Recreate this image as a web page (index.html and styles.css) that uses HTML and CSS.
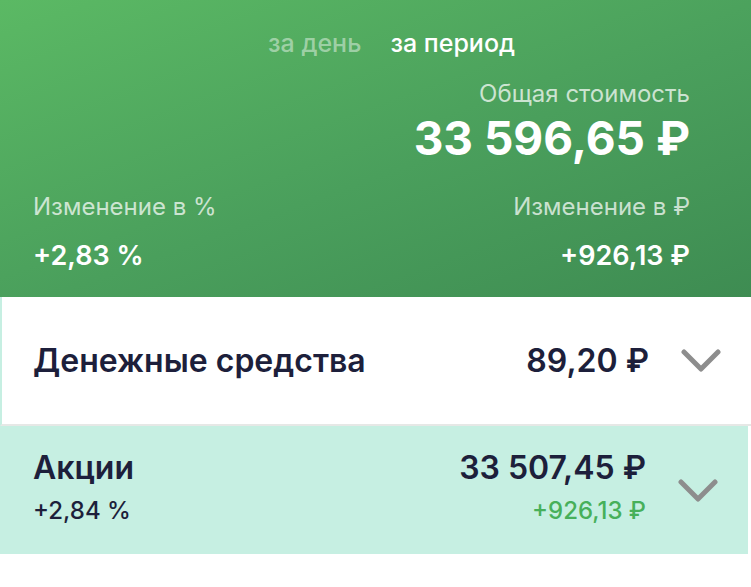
FILE: index.html
```html
<!DOCTYPE html>
<html lang="ru">
<head>
    <meta charset="UTF-8">
    <meta name="viewport" content="width=device-width, initial-scale=1.0">
    <title>Портфель</title>
    <link rel="stylesheet" href="styles.css">
</head>
<body>
    <div class="summary">
        <div class="tabs">
            <span class="tab">за день</span>
            <span class="tab active">за период</span>
        </div>
        <div class="total">
            <div class="label">Общая стоимость</div>
            <div class="total-value">33 596,65 ₽</div>
        </div>
        <div class="changes">
            <div class="change">
                <div class="label">Изменение в %</div>
                <div class="change-value">+2,83 %</div>
            </div>
            <div class="change right">
                <div class="label">Изменение в ₽</div>
                <div class="change-value">+926,13 ₽</div>
            </div>
        </div>
    </div>

    <div class="row cash">
        <div class="row-left">
            <div class="row-title">Денежные средства</div>
        </div>
        <div class="row-right">
            <div class="row-amount">89,20 ₽</div>
        </div>
        <svg class="chevron" viewBox="0 0 40 24" width="40" height="24">
            <path d="M3 3 L20 20 L37 3" fill="none" stroke="#8d8d8d" stroke-width="5" stroke-linecap="round" stroke-linejoin="round"/>
        </svg>
    </div>

    <div class="row stocks">
        <div class="row-left">
            <div class="row-title">Акции</div>
            <div class="row-sub">+2,84 %</div>
        </div>
        <div class="row-right">
            <div class="row-amount">33 507,45 ₽</div>
            <div class="row-sub green">+926,13 ₽</div>
        </div>
        <svg class="chevron" viewBox="0 0 40 24" width="40" height="24">
            <path d="M3 3 L20 20 L37 3" fill="none" stroke="#8d8d8d" stroke-width="5" stroke-linecap="round" stroke-linejoin="round"/>
        </svg>
    </div>
</body>
</html>
```

FILE: styles.css
```css
* {
    margin: 0;
    padding: 0;
    box-sizing: border-box;
    font-family: Inter, "Noto Sans", sans-serif;
}

body {
    width: 751px;
    height: 587px;
    background: #fff;
    overflow: hidden;
}

.summary {
    height: 297px;
    padding: 28px 61px 0 33px;
    color: #fff;
    background: linear-gradient(160deg, #5bb964 0%, #4a9f5c 55%, #3e8c52 100%);
}

.tabs {
    display: flex;
    justify-content: center;
    gap: 29px;
    padding-left: 60px;
    font-size: 25px;
    line-height: 30px;
    font-weight: 500;
}

.tab {
    color: rgba(255, 255, 255, 0.45);
}

.tab.active {
    color: #fff;
}

.label {
    font-size: 24px;
    line-height: 30px;
    color: rgba(255, 255, 255, 0.72);
}

.total {
    text-align: right;
    margin-top: 21px;
}

.total-value {
    font-size: 46px;
    font-weight: 700;
    line-height: 46px;
    margin-top: 6px;
}

.changes {
    display: flex;
    justify-content: space-between;
    margin-top: 31px;
}

.change.right {
    text-align: right;
}

.change-value {
    font-size: 27px;
    line-height: 33px;
    font-weight: 600;
    margin-top: 17px;
}

.row {
    display: flex;
    align-items: center;
    padding: 0 33px;
    color: #1d1f3b;
}

.row-left {
    flex: 1;
}

.row-right {
    text-align: right;
}

.cash {
    height: 129px;
    border-left: 2px solid #c6efe2;
    border-bottom: 2px solid #e6e8e6;
    padding-left: 31px;
}

.stocks {
    height: 128px;
    background: #c6efe2;
    margin-right: 3px;
    align-items: flex-start;
    padding-top: 23px;
}

.row-title,
.row-amount {
    font-size: 32px;
    line-height: 38px;
    font-weight: 600;
}

.row-sub {
    font-size: 24px;
    line-height: 28px;
    font-weight: 500;
    margin-top: 10px;
}

.green {
    color: #47b05a;
}

.chevron {
    margin-left: 32px;
    margin-right: -3px;
}

.stocks .chevron {
    align-self: center;
    margin-top: -21px;
}
```
